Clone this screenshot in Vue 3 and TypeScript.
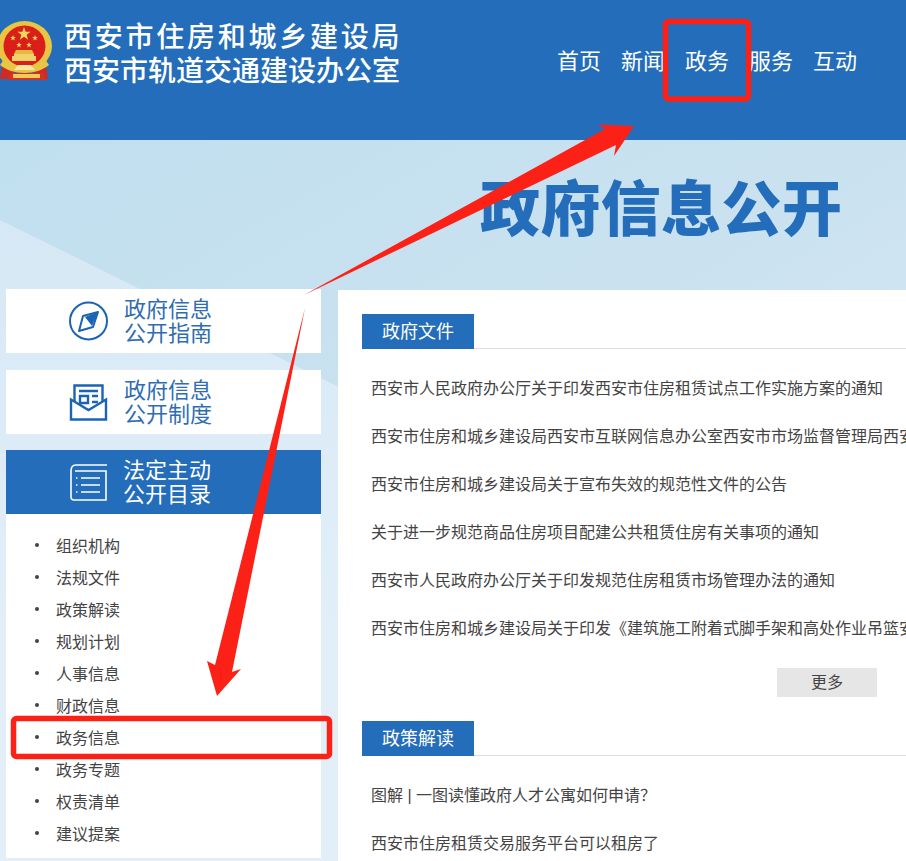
<script setup lang="ts">
const navItems = ['首页', '新闻', '政务', '服务', '互动']
const catalog = ['组织机构', '法规文件', '政策解读', '规划计划', '人事信息', '财政信息', '政务信息', '政务专题', '权责清单', '建议提案']
const fileLinks = [
  '西安市人民政府办公厅关于印发西安市住房租赁试点工作实施方案的通知',
  '西安市住房和城乡建设局西安市互联网信息办公室西安市市场监督管理局西安市',
  '西安市住房和城乡建设局关于宣布失效的规范性文件的公告',
  '关于进一步规范商品住房项目配建公共租赁住房有关事项的通知',
  '西安市人民政府办公厅关于印发规范住房租赁市场管理办法的通知',
  '西安市住房和城乡建设局关于印发《建筑施工附着式脚手架和高处作业吊篮安全'
]
const readLinks = ['图解 | 一图读懂政府人才公寓如何申请？', '西安市住房租赁交易服务平台可以租房了']

function star(cx: number, cy: number, r: number): string {
  const pts: string[] = []
  for (let i = 0; i < 10; i++) {
    const rad = i % 2 === 0 ? r : r * 0.4
    const a = -Math.PI / 2 + (i * Math.PI) / 5
    pts.push(`${(cx + rad * Math.cos(a)).toFixed(2)},${(cy + rad * Math.sin(a)).toFixed(2)}`)
  }
  return pts.join(' ')
}
const stars = [star(24, 13, 7), star(13, 17, 3), star(19, 24, 3), star(29, 24, 3), star(35, 17, 3)]
</script>

<template>
  <div class="page">
    <header class="header">
      <svg class="emblem" viewBox="0 0 53 60">
        <path d="M3 38L0 58h12l3-12zM45 38l3 20H36l-3-12z" fill="#cf2a24" />
        <ellipse cx="24.500" cy="25" rx="27.500" ry="25" fill="#e9c544" />
        <ellipse cx="24.500" cy="25" rx="21" ry="20.500" fill="#da1f1b" />
        <polygon v-for="(p, i) in stars" :key="i" :points="p" fill="#f4d65a" />
        <path d="M14 33h20v2h2v5H12v-5h2z" fill="#f0d26c" />
        <path d="M16 29h16l2 4H14z" fill="#e3b93e" />
        <path d="M4 38c5 5 12 8 20.500 8S40 43 45 38l4 6c-6 5-15 8-24.500 8S6 49 0 44z" fill="#e9c544" />
        <path d="M18 44h13l4 5H14z" fill="#f6e7a0" />
        <path d="M10 52h34l2 7H8z" fill="#d4302a" />
        <path d="M13 53h27v4H13z" fill="#edcc58" />
      </svg>
      <div class="org-name">
        <div class="org-line spaced">西安市住房和城乡建设局</div>
        <div class="org-line">西安市轨道交通建设办公室</div>
      </div>
      <nav class="nav">
        <a v-for="item in navItems" :key="item" class="nav-item">{{ item }}</a>
      </nav>
    </header>

    <section class="banner">
      <div class="banner-light"></div>
      <h1 class="banner-title">政府信息公开</h1>

      <div class="columns">
        <aside class="sidebar">
          <div class="side-card">
            <svg class="side-icon" viewBox="0 0 40 40" fill="none">
              <circle cx="19.500" cy="20" r="18.500" stroke="#1b64b5" stroke-width="2" />
              <path d="M29 11L14 15 10 30 24 26z" stroke="#1b64b5" stroke-width="2" stroke-linejoin="round" />
              <path d="M29 11L16 16 23 25z" fill="#1b64b5" />
            </svg>
            <div class="side-label">政府信息<br />公开指南</div>
          </div>
          <div class="side-card">
            <svg class="side-icon" viewBox="0 0 40 40" fill="none" stroke="#1b64b5" stroke-width="2.400">
              <path d="M5.500 19V3.500h28V19" />
              <path d="M2 17.500V37.500h35V17.500L19.500 28z" />
              <path d="M10 9h19M11 14h8v7h-8zM23 14h6M23 20h6" />
            </svg>
            <div class="side-label">政府信息<br />公开制度</div>
          </div>
          <div class="side-card active">
            <svg class="side-icon" viewBox="0 0 40 40" fill="none" stroke="#fff" stroke-width="1.600">
              <path d="M38 3H7C3 3 2 6 2 9v26c0 2 1 3 3 3h32V9H6" />
              <path d="M12 16h19M12 23h19M12 30h19" />
              <path d="M7 16h1.500M7 23h1.500M7 30h1.500" />
            </svg>
            <div class="side-label">法定主动<br />公开目录</div>
          </div>
          <ul class="catalog">
            <li v-for="item in catalog" :key="item" class="catalog-item">
              <span class="bullet"></span>{{ item }}
            </li>
          </ul>
        </aside>

        <main class="panel">
          <div class="section-head"><span class="section-tab">政府文件</span></div>
          <ul class="links">
            <li v-for="link in fileLinks" :key="link" class="link-row">{{ link }}</li>
          </ul>
          <div class="more-row"><span class="more">更多</span></div>
          <div class="section-head"><span class="section-tab">政策解读</span></div>
          <ul class="links read">
            <li v-for="link in readLinks" :key="link" class="link-row">{{ link }}</li>
          </ul>
        </main>
      </div>
    </section>

    <!-- red markup drawn on top of the screenshot -->
    <svg class="markup" viewBox="0 0 906 861">
      <rect x="665.500" y="21.500" width="83" height="77.500" rx="3" fill="none" stroke="#fb2117" stroke-width="5.500" />
      <rect x="13.500" y="718.500" width="316" height="38" rx="3" fill="none" stroke="#fb2117" stroke-width="5.500" />
      <path d="M304 295L605 129 598 124.500 634 126 614 156 616 145z" fill="#fb2117" />
      <path d="M305 308L232 672 241 669 217 696 207 661 215 665z" fill="#fb2117" />
    </svg>
  </div>
</template>

<style>
html,
body {
  margin: 0;
  overflow: hidden;
  background: #fff;
}
</style>

<style scoped>
.page {
  position: relative;
  width: 906px;
  height: 861px;
  overflow: hidden;
  font-family: "Liberation Sans", "Noto Sans CJK SC", sans-serif;
}

.header {
  display: flex;
  height: 140px;
  background: #236dba;
}

.emblem {
  flex-shrink: 0;
  width: 53px;
  height: 60px;
  margin-top: 21px;
}

.org-name {
  flex-shrink: 0;
  width: 340px;
  margin: 21px 0 0 11px;
  color: #fff;
  font-size: 28px;
  font-weight: 500;
  line-height: 33.500px;
  white-space: nowrap;
}

.org-line.spaced {
  letter-spacing: 2.750px;
}

.nav {
  display: flex;
  gap: 20px;
  margin: 47px 0 0 153px;
}

.nav-item {
  color: #fff;
  font-size: 22px;
  line-height: 30px;
}

.banner {
  position: relative;
  height: 721px;
  padding-top: 149px;
  box-sizing: border-box;
  background: linear-gradient(150deg, #c0dfef 0%, #cbe2f0 45%, #e2eff9 100%);
  overflow: hidden;
}

.banner-light {
  position: absolute;
  inset: 0;
  background: linear-gradient(180deg, #d6e8f5 10%, #e2eff9 70%);
  clip-path: polygon(0 80px, 345px 250px, 345px 721px, 0 721px);
}

.banner-title {
  position: absolute;
  left: 480px;
  top: 34px;
  margin: 0;
  color: #236dba;
  font-size: 60px;
  font-weight: 900;
  letter-spacing: 0.400px;
  line-height: 74px;
  white-space: nowrap;
}

.columns {
  position: relative;
  display: flex;
  gap: 17px;
  padding-left: 6px;
}

.sidebar {
  flex-shrink: 0;
  width: 315px;
}

.side-card {
  display: flex;
  align-items: center;
  gap: 15px;
  height: 64px;
  margin-bottom: 16.500px;
  padding-left: 63px;
  background: #fff;
}

.side-card.active {
  gap: 14px;
  margin-bottom: 0;
  background: #236dba;
}

.side-icon {
  width: 40px;
  height: 40px;
  flex-shrink: 0;
}

.side-label {
  width: 90px;
  padding-top: 2px;
  color: #2f6db2;
  font-size: 22px;
  line-height: 24px;
}

.active .side-label {
  color: #fff;
}

.catalog {
  margin: 0;
  padding: 15px 0 9px;
  list-style: none;
  background: #fff;
}

.catalog-item {
  display: flex;
  align-items: center;
  height: 32px;
  color: #444;
  font-size: 16px;
}

.bullet {
  width: 4px;
  height: 4px;
  margin: 0 17px 0 29px;
  border-radius: 50%;
  background: #444;
}

.panel {
  flex: 1;
  min-width: 0;
  height: 580px;
  margin-top: 1px;
  padding: 24px 0 0 24px;
  background: #fff;
  overflow: hidden;
}

.section-head {
  height: 34px;
  border-bottom: 1px solid #ddd;
}

.section-tab {
  display: inline-block;
  width: 112px;
  height: 35px;
  color: #fff;
  font-size: 18px;
  line-height: 36px;
  text-align: center;
  background: #236dba;
}

.links {
  margin: 0;
  padding: 16px 0 0 9px;
  list-style: none;
}

.link-row {
  height: 48px;
  color: #444;
  font-size: 16px;
  line-height: 48px;
  white-space: nowrap;
}

.more-row {
  display: flex;
  justify-content: flex-end;
  height: 53px;
  margin-top: 15px;
  padding-right: 29px;
}

.more {
  width: 100px;
  height: 29px;
  color: #444;
  font-size: 16px;
  line-height: 29px;
  text-align: center;
  background: #e6e6e6;
}

.markup {
  position: absolute;
  left: 0;
  top: 0;
  width: 906px;
  height: 861px;
  pointer-events: none;
}
</style>
